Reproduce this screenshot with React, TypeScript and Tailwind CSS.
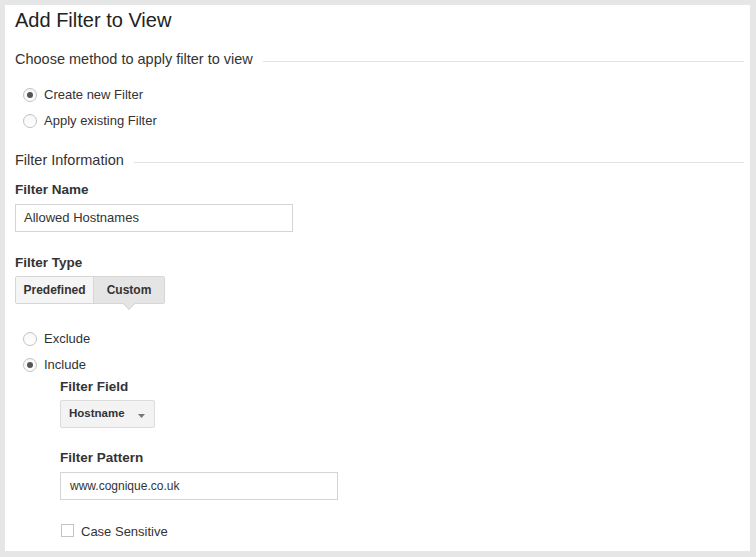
import React from "react";

function Radio({ checked }: { checked?: boolean }) {
  return (
    <span className="w-[14px] h-[14px] rounded-full border border-[#c2c2c2] bg-gradient-to-b from-[#f7f7f7] to-white flex items-center justify-center shrink-0">
      {checked && <span className="w-[6px] h-[6px] rounded-full bg-[#555]" />}
    </span>
  );
}

function SectionTitle({ label, className }: { label: string; className?: string }) {
  return (
    <div className={`flex items-center h-[20px] ${className ?? ""}`}>
      <span className="text-[14.5px] leading-[20px] text-[#333] whitespace-nowrap">{label}</span>
      <div className="flex-1 h-px bg-[#e3e3e3] ml-[10px] mt-[4px]" />
    </div>
  );
}

function RadioRow({ label, checked }: { label: string; checked?: boolean }) {
  return (
    <label className="flex items-center h-[26px] pl-[8px] gap-[7px] text-[13px] text-[#333]">
      <Radio checked={checked} />
      <span>{label}</span>
    </label>
  );
}

function FieldLabel({ children, className }: { children: React.ReactNode; className?: string }) {
  return (
    <div className={`text-[13.5px] leading-[18px] font-bold text-[#333] ${className ?? ""}`}>{children}</div>
  );
}

export default function App() {
  return (
    <div className="w-full h-[557px] bg-[#e6e6e6] pt-[5px] pl-[5px] pr-[6px] pb-[6px] font-['Liberation_Sans',Arial,sans-serif]">
      <div className="h-full bg-white pl-[10px] pr-[6px] pt-[3px]">
        <h1 className="text-[20px] leading-[24px] text-[#222]">Add Filter to View</h1>

        <SectionTitle label="Choose method to apply filter to view" className="mt-[17px]" />

        <div className="mt-[13px]">
          <RadioRow label="Create new Filter" checked />
          <RadioRow label="Apply existing Filter" />
        </div>

        <SectionTitle label="Filter Information" className="mt-[16px]" />

        <FieldLabel className="mt-[11px]">Filter Name</FieldLabel>
        <div className="mt-[5px] w-[278px] h-[28px] border border-[#d4d4d4] flex items-center pl-[8px] text-[13px] text-[#333]">
          Allowed Hostnames
        </div>

        <FieldLabel className="mt-[22px]">Filter Type</FieldLabel>
        <div className="mt-[4px] inline-flex h-[28px] border border-[#d6d6d6] rounded-[2px] text-[12px] font-bold text-[#333]">
          <div className="w-[77px] flex items-center justify-center bg-[#f5f5f5]">Predefined</div>
          <div className="relative w-[71px] flex items-center justify-center bg-[#e5e5e5] border-l border-[#d6d6d6]">
            Custom
            <span className="absolute left-1/2 -bottom-[5px] w-[9px] h-[9px] -translate-x-1/2 rotate-45 bg-[#e5e5e5] border-r border-b border-[#d6d6d6]" />
          </div>
        </div>

        <div className="mt-[22px]">
          <RadioRow label="Exclude" />
          <RadioRow label="Include" checked />
        </div>

        <div className="pl-[45px]">
          <FieldLabel>Filter Field</FieldLabel>
          <div className="mt-[4px] w-[95px] h-[28px] border border-[#dcdcdc] rounded-[2px] bg-[#f3f3f3] flex items-center justify-between pl-[8px] pr-[9px]">
            <span className="text-[11.5px] font-bold text-[#333]">Hostname</span>
            <svg width="7" height="4" viewBox="0 0 7 4" className="mt-[3px]">
              <polygon points="0,0 7,0 3.5,4" fill="#777" />
            </svg>
          </div>

          <FieldLabel className="mt-[21px]">Filter Pattern</FieldLabel>
          <div className="mt-[5px] w-[278px] h-[28px] border border-[#d4d4d4] flex items-center pl-[9px] text-[12px] text-[#333]">
            www.cognique.co.uk
          </div>

          <label className="mt-[22px] flex items-start h-[20px] gap-[7px] pl-[1px] text-[13px] leading-[20px] text-[#333]">
            <span className="mt-[2px] w-[13px] h-[13px] border border-[#c4c4c4] bg-white shrink-0" />
            <span>Case Sensitive</span>
          </label>
        </div>
      </div>
    </div>
  );
}
